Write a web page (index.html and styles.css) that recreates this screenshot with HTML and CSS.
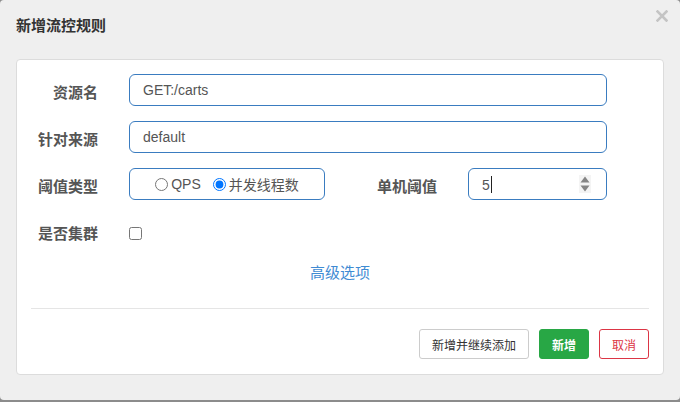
FILE: index.html
```html
<!DOCTYPE html>
<html>
<head>
    <meta charset="utf-8">
    <title>新增流控规则</title>
    <link rel="stylesheet" href="styles.css">
</head>
<body>
    <div class="modal">
        <div class="modal-header">
            <span class="modal-title">新增流控规则</span>
            <span class="close-btn">
                <svg width="12" height="12" viewBox="0 0 12 12">
                    <path d="M1.5 1.5 L10.5 10.5 M10.5 1.5 L1.5 10.5" stroke="#c4c4c4" stroke-width="2.6" stroke-linecap="square"/>
                </svg>
            </span>
        </div>

        <div class="panel">
            <div class="form-row">
                <label class="form-label">资源名</label>
                <div class="form-input wide">GET:/carts</div>
            </div>
            <div class="form-row">
                <label class="form-label">针对来源</label>
                <div class="form-input wide">default</div>
            </div>
            <div class="form-row">
                <label class="form-label">阈值类型</label>
                <div class="radio-group">
                    <label class="radio-item"><input type="radio" name="grade"><span>QPS</span></label>
                    <label class="radio-item"><input type="radio" name="grade" checked><span class="cn">并发线程数</span></label>
                </div>
                <label class="form-label second">单机阈值</label>
                <div class="form-input number">
                    <span>5<span class="caret"></span></span>
                    <svg class="spinner" width="12" height="18" viewBox="0 0 12 18">
                        <rect width="12" height="18" fill="#f4f4f4"/>
                        <polygon points="1.5,7.5 6,1.5 10.5,7.5" fill="#858585"/>
                        <polygon points="1.5,10.5 6,16.5 10.5,10.5" fill="#858585"/>
                    </svg>
                </div>
            </div>
            <div class="form-row cluster">
                <label class="form-label">是否集群</label>
                <input type="checkbox" class="check">
            </div>

            <div class="advanced"><a>高级选项</a></div>

            <hr class="divider">

            <div class="actions">
                <button class="btn btn-default">新增并继续添加</button>
                <button class="btn btn-success">新增</button>
                <button class="btn btn-cancel">取消</button>
            </div>
        </div>
    </div>
</body>
</html>
```

FILE: styles.css
```css
html, body {
    margin: 0;
    padding: 0;
    background-color: #8c8c8c;
}

body {
    font-family: "Liberation Sans", "Noto Sans CJK SC", sans-serif;
    font-size: 14px;
    color: #555;
}

.modal {
    width: 680px;
    height: 400px;
    background-color: #efefef;
    border-radius: 4px;
}

.modal-header {
    height: 59px;
    display: flex;
    justify-content: space-between;
    align-items: flex-start;
    padding: 0 12px 0 16px;
    box-sizing: border-box;
}

.modal-title {
    margin-top: 15px;
    font-size: 15px;
    line-height: 20px;
    font-weight: bold;
    color: #333;
    font-family: "Noto Sans CJK SC", sans-serif;
}

.close-btn {
    margin-top: 10px;
    display: flex;
}

.panel {
    margin: 0 16px;
    background-color: white;
    border: 1px solid #dcdcdc;
    border-radius: 4px;
    padding: 14px 0 15px 0;
}

.form-row {
    display: flex;
    align-items: center;
    height: 32px;
    margin-bottom: 15px;
}

.form-label {
    width: 81px;
    margin-right: 31px;
    text-align: right;
    font-family: "Noto Sans CJK SC", sans-serif;
    font-size: 15px;
    font-weight: bold;
    color: #555;
    padding-top: 3px;
}

.form-label.second {
    width: 112px;
}

.form-input {
    height: 32px;
    box-sizing: border-box;
    border: 1px solid #3a7cc0;
    border-radius: 6px;
    padding: 0 12px 0 13px;
    display: flex;
    align-items: center;
    color: #555;
    font-size: 14px;
}

.wide {
    width: 478px;
}

.number {
    width: 139px;
    justify-content: space-between;
    padding-right: 15px;
}

.caret {
    display: inline-block;
    width: 1px;
    height: 17px;
    background-color: #222;
    margin-left: 1px;
    vertical-align: -3px;
}

.radio-group {
    width: 196px;
    height: 32px;
    box-sizing: border-box;
    border: 1px solid #3a7cc0;
    border-radius: 6px;
    display: flex;
    align-items: center;
    justify-content: center;
}

.radio-item {
    display: flex;
    align-items: center;
    color: #555;
}

.radio-item input {
    margin: 0 3px 0 0;
    width: 13px;
    height: 13px;
}

.radio-item + .radio-item {
    margin-left: 12px;
}

.cn {
    font-family: "Noto Sans CJK SC", sans-serif;
}

.cluster {
    margin-top: 2px;
}

.check {
    margin: 4px 0 0 0;
    width: 13px;
    height: 13px;
}

.advanced {
    text-align: center;
    margin-top: 0;
    line-height: 20px;
}

.advanced a {
    font-family: "Noto Sans CJK SC", sans-serif;
    font-size: 15px;
    color: #3f8bd3;
    cursor: pointer;
}

.divider {
    border: none;
    border-top: 1px solid #e5e5e5;
    margin: 25px 14px 20px 14px;
}

.actions {
    display: flex;
    justify-content: flex-end;
    gap: 10px;
    padding-right: 14px;
}

.btn {
    height: 30px;
    padding: 0 12px;
    border-radius: 3px;
    font-family: "Noto Sans CJK SC", sans-serif;
    font-size: 12px;
    cursor: pointer;
}

.btn-default {
    background-color: white;
    border: 1px solid #ccc;
    color: #333;
}

.btn-success {
    background-color: #28a745;
    border: 1px solid #28a745;
    color: white;
    font-weight: bold;
}

.btn-cancel {
    background-color: white;
    border: 1px solid #dc3545;
    color: #dc3545;
}
```
